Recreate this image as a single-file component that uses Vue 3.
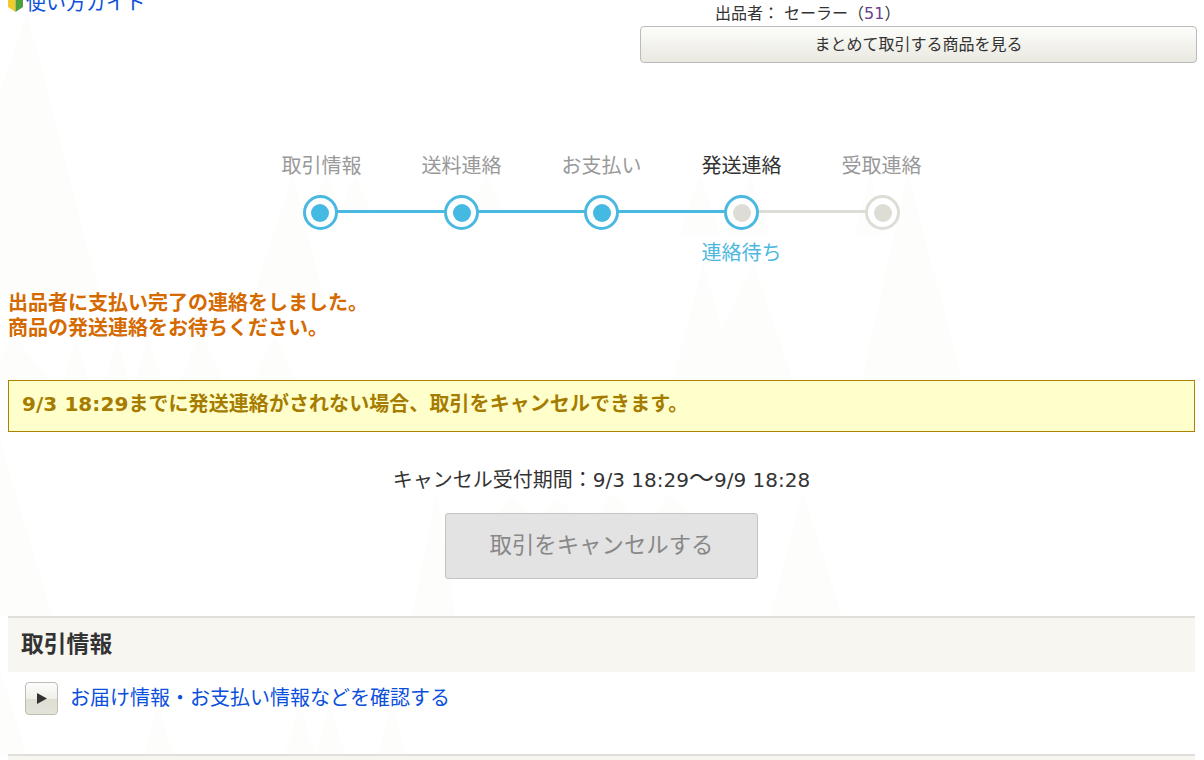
<script setup>
const steps = [
  { label: '取引情報', state: 'done' },
  { label: '送料連絡', state: 'done' },
  { label: 'お支払い', state: 'done' },
  { label: '発送連絡', state: 'current', note: '連絡待ち' },
  { label: '受取連絡', state: 'todo' }
]
const peaks = [
  '27,13 100,295 -70,295', '15,335 -15,380 48,380', '76,338 64,380 89,380', '117,338 105,380 129,380',
  '148,338 135,380 162,380', '200,332 180,380 222,380', '275,335 254,380 296,380',
  '293,175 252,300 325,300', '327,175 310,212 344,212', '355,175 340,212 372,212', '487,175 470,212 505,212',
  '700,173 680,235 720,235', '750,173 730,235 770,235', '703,262 673,380 735,380', '753,262 697,380 793,380',
  '870,173 855,235 885,235', '908,173 862,380 962,380',
  '0,440 -30,615 52,615', '437,490 412,616 455,616', '803,493 770,616 842,616',
  '513,497 495,516 531,516', '557,497 539,516 575,516', '613,493 595,516 631,516', '670,493 652,516 688,516',
  '-3,660 -30,755 27,755', '158,703 145,755 173,755', '300,703 285,755 315,755', '330,703 317,755 345,755',
  '392,703 378,755 405,755'
]
</script>

<template>
  <div class="page">
    <svg class="backdrop" width="1204" height="760" aria-hidden="true">
      <polygon v-for="p in peaks" :key="p" :points="p" fill="#fdfdfb" />
    </svg>

    <div class="content">
      <header class="top">
        <a class="guide">
          <svg class="mark" width="15" height="19" viewBox="0 0 15 19">
            <path d="M0 0H7.5V19L0 14Z" fill="#f1cb2e" />
            <path d="M7.5 0H15V14L7.5 19Z" fill="#4ea03e" />
          </svg>
          <span>使い方ガイド</span>
        </a>
        <div class="seller">
          <div class="seller-name">出品者： セーラー（<span class="score">51</span>）</div>
          <button class="bundle">まとめて取引する商品を見る</button>
        </div>
      </header>

      <ol class="steps">
        <li v-for="s in steps" :key="s.label" class="step" :class="s.state">
          <span class="step-label">{{ s.label }}</span>
          <span class="dot"><i></i></span>
          <span class="step-note">{{ s.note }}</span>
        </li>
      </ol>

      <p class="message">出品者に支払い完了の連絡をしました。<br>商品の発送連絡をお待ちください。</p>

      <div class="notice">9/3 18:29までに発送連絡がされない場合、取引をキャンセルできます。</div>

      <p class="period">キャンセル受付期間：9/3 18:29<span class="tilde">～</span>9/9 18:28</p>
      <div class="cancel-wrap"><button class="cancel">取引をキャンセルする</button></div>

      <section class="info">
        <h2>取引情報</h2>
        <div class="info-row">
          <span class="play"><svg width="10" height="11" viewBox="0 0 10 11"><path d="M0 0L10 5.5L0 11Z" fill="#333" /></svg></span>
          <a class="info-link">お届け情報・お支払い情報などを確認する</a>
        </div>
      </section>
      <div class="next-section"></div>
    </div>
  </div>
</template>

<style>
html, body { margin: 0; background: #fff; }
</style>

<style scoped>
.page {
  position: relative;
  width: 1204px;
  height: 760px;
  overflow: hidden;
  font-family: "DejaVu Sans", "Noto Sans CJK JP", sans-serif;
  color: #333;
}
.backdrop { position: absolute; left: 0; top: 0; }
.content { position: relative; padding: 0 9px 0 8px; }
.top { display: flex; justify-content: space-between; height: 63px; }
.guide {
  display: flex;
  align-items: flex-start;
  gap: 3px;
  height: 20px;
  margin-top: -7px;
  font-size: 20px;
  line-height: 20px;
  color: #0b50dc;
}
.mark { flex: none; }
.seller { width: 557px; margin-right: -2px; }
.seller-name {
  height: 26px;
  padding-left: 75px;
  font-size: 16px;
  line-height: 28px;
}
.score { color: #6a3f8f; }
.bundle {
  display: block;
  box-sizing: border-box;
  width: 100%;
  height: 37px;
  padding: 0 0 3px;
  border: 1px solid #bbb;
  border-radius: 4px;
  background: linear-gradient(#fdfdfb, #e9e8e0);
  font: inherit;
  font-size: 16px;
  color: #333;
}
.steps {
  display: flex;
  justify-content: center;
  width: 700px;
  margin: 0 auto;
  padding: 89px 0 0;
  list-style: none;
}
.step {
  position: relative;
  display: flex;
  flex-direction: column;
  align-items: center;
  width: 140px;
  font-size: 20px;
  color: #999;
}
.step-label { height: 42px; line-height: 28px; }
.step-note { height: 30px; margin-top: 8px; line-height: 30px; color: #4cb8e0; }
.current .step-label { color: #333; }
.dot {
  position: relative;
  z-index: 1;
  display: flex;
  align-items: center;
  justify-content: center;
  box-sizing: border-box;
  width: 35px;
  height: 35px;
  margin-top: 1px;
  border: 3px solid #4ab9e1;
  border-radius: 50%;
  background: #fff;
}
.step:first-child .dot { margin-left: -3px; }
.step:last-child .dot { margin-left: 2px; }
.dot i {
  width: 18px;
  height: 18px;
  border-radius: 50%;
  background: #44b9e1;
}
.current .dot i, .todo .dot i { background: #dddcd5; }
.todo .dot { border-color: #dddcd5; }
.step:not(:last-child)::after {
  content: "";
  position: absolute;
  left: 70px;
  top: 58px;
  width: 140px;
  height: 3px;
  background: #4ab9e1;
}
.current::after { background: #dddcd5 !important; }
.message {
  margin: 23px 0 0;
  font-size: 20px;
  font-weight: 700;
  line-height: 25px;
  color: #d46a00;
}
.notice {
  box-sizing: border-box;
  height: 52px;
  margin-top: 39px;
  padding: 0 13px;
  border: 1px solid #ae8200;
  background: #ffc;
  font-size: 20px;
  font-weight: 700;
  line-height: 46px;
  letter-spacing: 0.07px;
  color: #a67c00;
}
.period {
  height: 30px;
  margin: 33px 0 0;
  font-size: 20px;
  line-height: 30px;
  text-align: center;
}
.tilde { font-size: 25px; line-height: 20px; }
.cancel-wrap { display: flex; justify-content: center; margin-top: 18px; }
.cancel {
  box-sizing: border-box;
  width: 313px;
  height: 66px;
  padding: 0 0 7px;
  border: 1px solid #c4c4c4;
  border-radius: 3px;
  background: #e3e3e3;
  font: inherit;
  font-size: 22.4px;
  color: #888;
}
.info { box-sizing: border-box; height: 140px; margin-top: 37px; border-bottom: 2px solid #e0ded8; }
.info h2 {
  box-sizing: border-box;
  height: 56px;
  margin: 0;
  padding-left: 13px;
  border-top: 2px solid #e0ded8;
  background: #f7f6f1;
  font-size: 22.8px;
  line-height: 52px;
  color: #333;
}
.info-row {
  display: flex;
  align-items: center;
  gap: 12px;
  padding: 10px 0 0 17px;
}
.play {
  display: flex;
  align-items: center;
  justify-content: center;
  box-sizing: border-box;
  width: 33px;
  height: 33px;
  border: 1px solid #bdbdb5;
  border-radius: 4px;
  background: linear-gradient(#fdfdfc, #f0efea 50%, #dfded3 52%, #e4e3da);
}
.info-link { margin-top: -2px; font-size: 20px; line-height: 30px; color: #0b50dc; }
.next-section { height: 4px; background: #f7f6f1; }
</style>
